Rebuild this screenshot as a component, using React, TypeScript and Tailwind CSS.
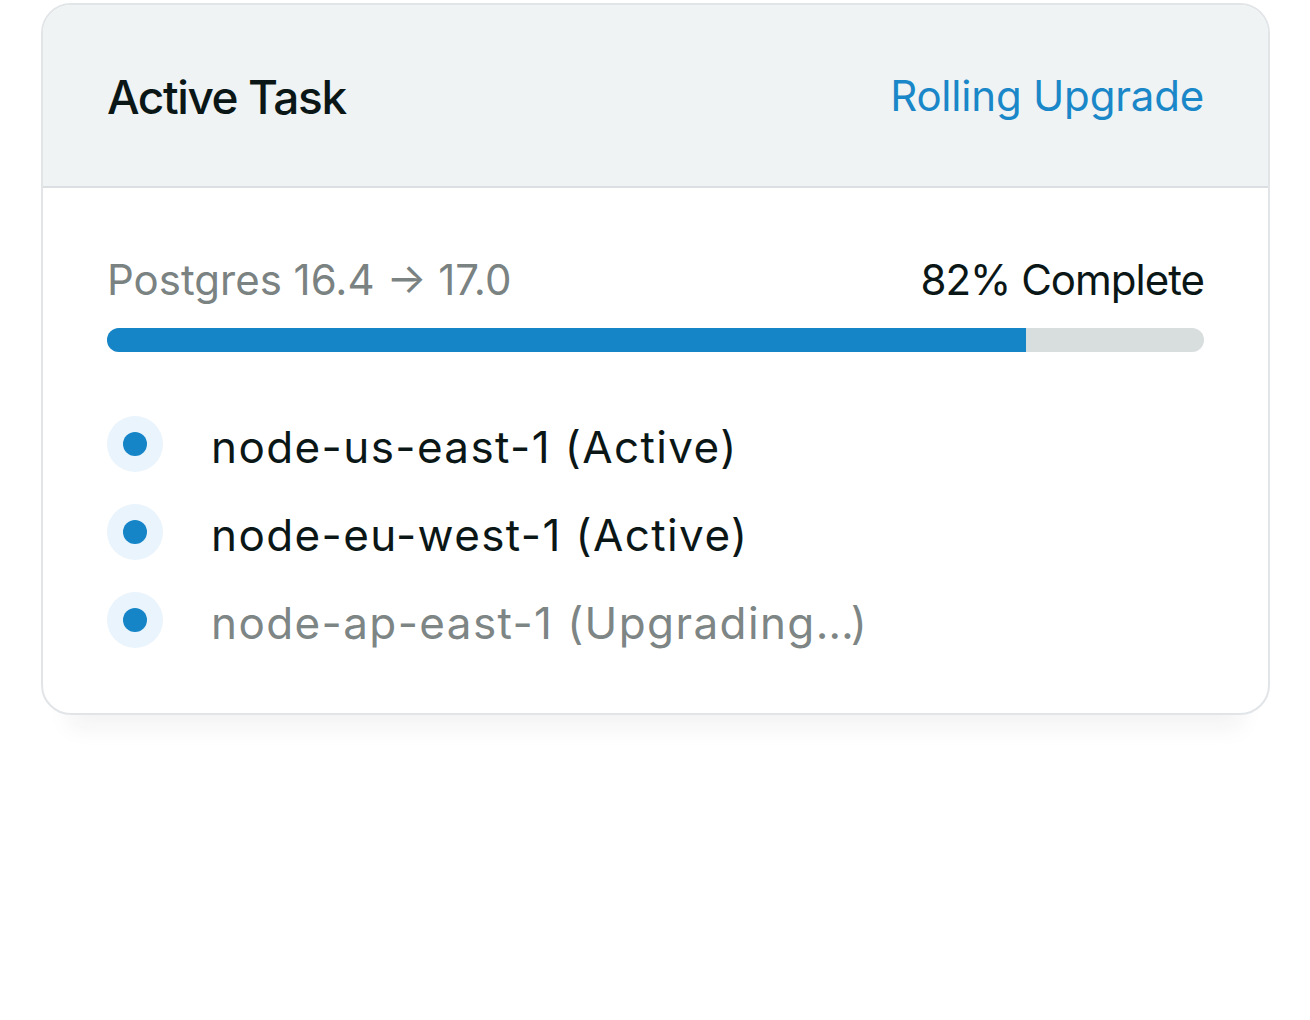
import React from "react"

const nodes = [
  { name: "node-us-east-1 (Active)", muted: false },
  { name: "node-eu-west-1 (Active)", muted: false },
  { name: "node-ap-east-1 (Upgrading", suffix: "…)", muted: true },
]

export default function App() {
  const progress = 83.8

  return (
    <div className="min-h-[1020px] bg-white pt-[3px] px-[41px] font-['Inter',sans-serif]">
      <div className="w-[1229px] rounded-[30px] border-2 border-[#e2e5e8] bg-white overflow-hidden shadow-[0_40px_24px_-28px_rgba(30,41,59,0.06)]">
        {/* Header */}
        <div className="h-[183px] flex items-center justify-between px-[64px] bg-[#eff3f4] border-b-2 border-[#dcdfe1]">
          <h2 className="text-[46px] leading-none font-medium text-[#0b1717] tracking-[-1.4px] pt-[2px]">Active Task</h2>
          <span className="text-[42px] leading-none text-[#1a87c8] tracking-[-0.2px]">Rolling Upgrade</span>
        </div>

        {/* Body */}
        <div className="px-[64px] pt-[66px] pb-[65px]">
          <div className="flex items-center justify-between h-[50px]">
            <span className="text-[42px] text-[#7a8282]">Postgres 16.4 → 17.0</span>
            <span className="text-[42px] text-[#0b1717] tracking-[-1px]">82% Complete</span>
          </div>

          <div className="mt-[24px] h-[24px] rounded-full bg-[#d8dddd] overflow-hidden">
            <div className="h-full bg-[#1585c7]" style={{ width: `${progress}%` }}></div>
          </div>

          <ul className="mt-[64px] flex flex-col gap-[32px]">
            {nodes.map((n) => (
              <li key={n.name} className="flex items-center h-[56px]">
                <div className="w-[56px] h-[56px] rounded-full bg-[#eaf4fd] flex items-center justify-center shrink-0">
                  <div className="w-[24px] h-[24px] rounded-full bg-[#1585c7]"></div>
                </div>
                <span
                  className={`ml-[48px] pt-[6px] text-[44px] leading-none tracking-[1.4px] ${
                    n.muted ? "text-[#7d8585]" : "text-[#0b1717]"
                  }`}
                >
                  {n.name}
                  {n.suffix && <span className="tracking-[-3px]">{n.suffix}</span>}
                </span>
              </li>
            ))}
          </ul>
        </div>
      </div>
    </div>
  )
}
